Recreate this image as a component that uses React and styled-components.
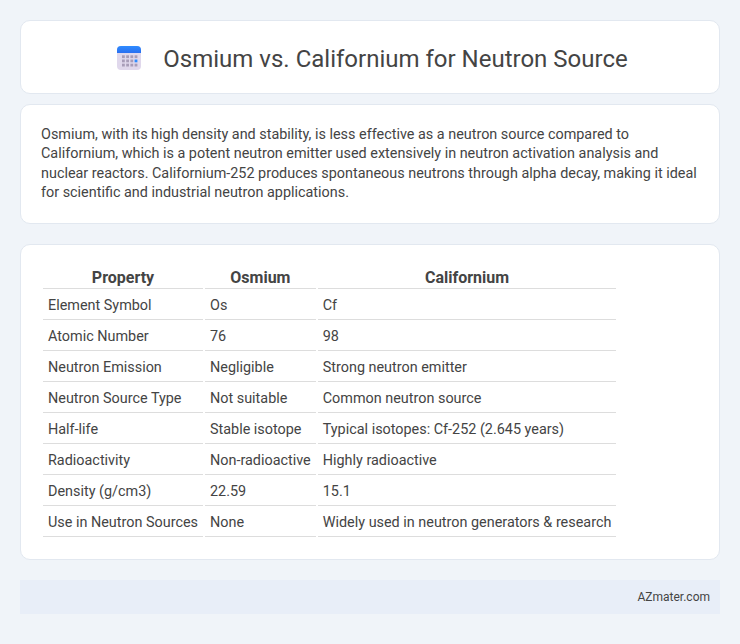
import styled, { createGlobalStyle } from "styled-components";

const GlobalStyle = createGlobalStyle`
  body {
    margin: 0;
    background: #f0f4f9;
    font-family: Roboto, "Liberation Sans", sans-serif;
    color: #444;
  }
`;

const Page = styled.div`
  padding: 20px 20px 30px;
`;

const Card = styled.section`
  background: #fff;
  border: 1px solid #e2e8f0;
  border-radius: 10px;
  box-sizing: border-box;
  padding: ${(props) => props.$padding};
  margin-bottom: ${(props) => props.$mb};
`;

const TitleRow = styled.div`
  display: flex;
  align-items: center;
  justify-content: center;
  height: 72px;
  gap: 22px;
  padding: 2px 0 0 5px;
  box-sizing: border-box;
`;

const Title = styled.h1`
  margin: 0;
  padding-top: 1px;
  font-size: 24px;
  font-weight: 400;
  color: #444;
`;

const Intro = styled.p`
  margin: 0;
  font-size: 14.4px;
  line-height: 19.4px;
`;

const Table = styled.table`
  border-collapse: separate;
  border-spacing: 2px;
  font-size: 14.4px;
`;

const Th = styled.th`
  font-size: 16px;
  font-weight: 700;
  padding: 2px 5px 0;
  height: 20px;
  line-height: 20px;
  border-bottom: 1px solid #ddd;
  text-align: center;
`;

const Td = styled.td`
  padding: 6px 5px 4px;
  height: 18px;
  line-height: 18px;
  border-bottom: 1px solid #ddd;
`;

const Footer = styled.footer`
  background: #e8eef8;
  height: 34px;
  display: flex;
  align-items: center;
  justify-content: flex-end;
  padding: 0 10px;
  font-size: 12px;
`;

const rows = [
  ["Element Symbol", "Os", "Cf"],
  ["Atomic Number", "76", "98"],
  ["Neutron Emission", "Negligible", "Strong neutron emitter"],
  ["Neutron Source Type", "Not suitable", "Common neutron source"],
  ["Half-life", "Stable isotope", "Typical isotopes: Cf-252 (2.645 years)"],
  ["Radioactivity", "Non-radioactive", "Highly radioactive"],
  ["Density (g/cm3)", "22.59", "15.1"],
  ["Use in Neutron Sources", "None", "Widely used in neutron generators & research"],
];

const CalendarIcon = () => (
  <svg width="24" height="24" viewBox="0 0 24 24">
    <defs>
      <linearGradient id="cal-top" x1="0" y1="0" x2="0" y2="1">
        <stop offset="0" stopColor="#2f8cff" />
        <stop offset="1" stopColor="#2a6ff0" />
      </linearGradient>
    </defs>
    <rect x="0" y="0" width="24" height="24" rx="4" fill="#e0d8ec" />
    <path d="M0 7V4a4 4 0 0 1 4-4h16a4 4 0 0 1 4 4v3z" fill="url(#cal-top)" />
    {[0, 1, 2, 3].map((col) =>
      [0, 1, 2].map((row) => (
        <rect
          key={col + "-" + row}
          x={5 + col * 4.2}
          y={9.3 + row * 4.2}
          width="2.8"
          height="2.8"
          fill={col === 3 && row === 1 ? "#2f8cff" : "#a89db8"}
        />
      ))
    )}
  </svg>
);

export default function App() {
  return (
    <Page>
      <GlobalStyle />
      <Card $mb="10px">
        <TitleRow>
          <CalendarIcon />
          <Title>Osmium vs. Californium for Neutron Source</Title>
        </TitleRow>
      </Card>
      <Card $padding="20px" $mb="20px">
        <Intro>
          Osmium, with its high density and stability, is less effective as a neutron source compared to
          Californium, which is a potent neutron emitter used extensively in neutron activation analysis and
          nuclear reactors. Californium-252 produces spontaneous neutrons through alpha decay, making it ideal
          for scientific and industrial neutron applications.
        </Intro>
      </Card>
      <Card $padding="19px 20px 20px" $mb="20px">
        <Table>
          <thead>
            <tr>
              <Th>Property</Th>
              <Th>Osmium</Th>
              <Th>Californium</Th>
            </tr>
          </thead>
          <tbody>
            {rows.map((row) => (
              <tr key={row[0]}>
                {row.map((cell) => (
                  <Td key={cell}>{cell}</Td>
                ))}
              </tr>
            ))}
          </tbody>
        </Table>
      </Card>
      <Footer>AZmater.com</Footer>
    </Page>
  );
}
